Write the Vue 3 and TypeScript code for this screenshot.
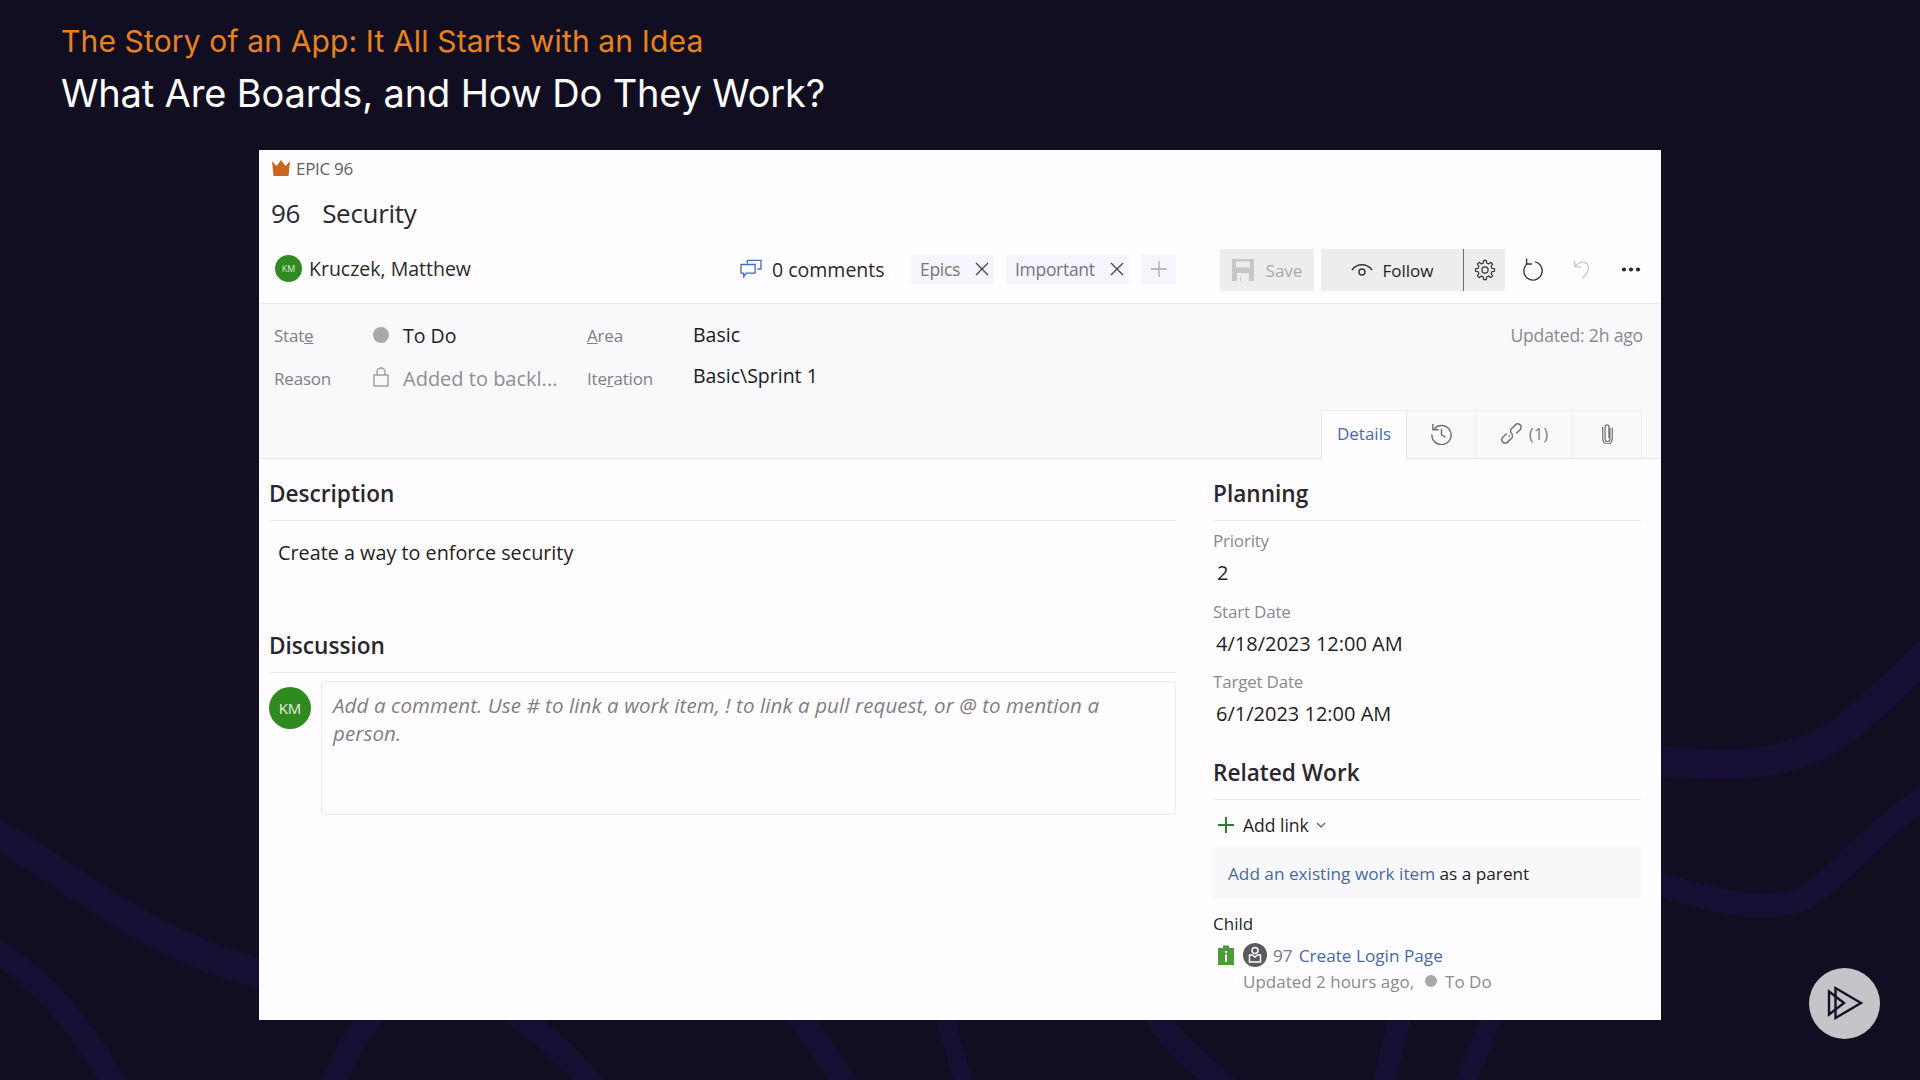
<script setup lang="ts">
const gearTeeth = 8

function gearPath(cx: number, cy: number, outer: number, inner: number): string {
  const pts: string[] = []
  for (let i = 0; i < gearTeeth; i++) {
    const a = (i / gearTeeth) * Math.PI * 2
    const step = (Math.PI * 2) / gearTeeth
    const offsets: [number, number][] = [
      [-0.3, inner],
      [-0.17, outer],
      [0.17, outer],
      [0.3, inner]
    ]
    for (const [o, r] of offsets) {
      const t = a + o * step
      pts.push(`${(cx + Math.cos(t) * r).toFixed(2)} ${(cy + Math.sin(t) * r).toFixed(2)}`)
    }
  }
  return `M${pts.join('L')}Z`
}

const gear = gearPath(12, 12, 10.5, 7.8)

const planning = [
  { label: 'Priority', value: '2', inset: 'inset-wide' },
  { label: 'Start Date', value: '4/18/2023 12:00 AM', inset: 'inset' },
  { label: 'Target Date', value: '6/1/2023 12:00 AM', inset: 'inset' }
]
</script>

<template>
  <div class="slide">
    <svg class="curves" viewBox="0 0 1920 1080" fill="none">
      <g stroke="#160f33">
        <path stroke-width="30" d="M-10 830 C80 880 150 950 270 975" />
        <path stroke-width="24" d="M-10 948 C40 975 85 1030 118 1090" />
        <path stroke-width="30" d="M1650 760 C1740 770 1800 765 1850 725 C1880 700 1900 680 1930 650" />
        <path stroke-width="24" d="M1650 882 C1700 895 1750 915 1800 900 C1840 880 1870 830 1930 795" />
        <path stroke-width="24" d="M332 1090 C345 1050 370 1010 400 990 C440 960 490 985 522 1020 C550 1040 575 1060 595 1090" />
        <path stroke-width="24" d="M795 1010 L850 1090" />
        <path stroke-width="18" d="M943 1010 L966 1090" />
        <path stroke-width="24" d="M1152 1010 C1170 1040 1200 1065 1229 1090" />
        <path stroke-width="22" d="M1402 1010 L1382 1090" />
        <path stroke-width="20" d="M1494 1010 L1463 1090" />
      </g>
    </svg>

    <header class="slide-head">
      <div class="course">The Story of an App: It All Starts with an Idea</div>
      <h1 class="clip">What Are Boards, and How Do They Work?</h1>
    </header>

    <main class="workitem">
      <div class="type-row">
        <svg class="crown" viewBox="0 0 18 16"><path d="M0 1l4.500 5L9 0l4.500 6L18 1l-1.500 15h-15z" fill="#c8661f" /></svg>
        <span>EPIC 96</span>
      </div>
      <div class="title-row"><span class="title-id">96</span><span>Security</span></div>

      <div class="action-row">
        <div class="assignee">
          <span class="avatar-sm">KM</span>
          <span>Kruczek, Matthew</span>
        </div>
        <div class="comments">
          <svg class="i-comments" viewBox="0 0 24 22" fill="none" stroke="#3f72b8" stroke-width="1.500">
            <path d="M8 5V1.500h15V11h-4" />
            <path d="M1 6h15.500v9.500H7l-3 4v-4H1z" />
          </svg>
          <span>0 comments</span>
        </div>
        <div class="tags">
          <span class="tag tag-epics">Epics
            <svg class="x" viewBox="0 0 14 14" stroke="#444" stroke-width="1.300"><path d="M1 1l12 12M13 1L1 13" /></svg>
          </span>
          <span class="tag tag-imp">Important
            <svg class="x" viewBox="0 0 14 14" stroke="#444" stroke-width="1.300"><path d="M1 1l12 12M13 1L1 13" /></svg>
          </span>
          <span class="tag tag-add">
            <svg class="plus" viewBox="0 0 16 16" stroke="#a9a9b2" stroke-width="1.300"><path d="M8 0v16M0 8h16" /></svg>
          </span>
        </div>
        <button class="btn btn-save">
          <svg class="i-save" viewBox="0 0 22 22" fill="#c6c6c6">
            <path fill-rule="evenodd" d="M0 0h22v22H0zM4 2.500v6h14v-6zM5 14v8h3v-4h1v4h8v-8z" />
          </svg>
          <span>Save</span>
        </button>
        <div class="follow-group">
          <button class="btn btn-follow">
            <svg class="i-eye" viewBox="0 0 22 14" fill="none" stroke="#333" stroke-width="1.400">
              <path d="M1 7c5-7 15-7 20 0" />
              <circle cx="11" cy="9" r="3" />
            </svg>
            <span>Follow</span>
          </button>
          <button class="btn btn-gear">
            <svg class="i-gear" viewBox="0 0 24 24" fill="none" stroke="#333" stroke-width="1.300">
              <path :d="gear" stroke-linejoin="round" />
              <circle cx="12" cy="12" r="3.400" />
            </svg>
          </button>
        </div>
        <svg class="i-refresh" viewBox="0 0 24 26" fill="none" stroke="#333" stroke-width="1.500">
          <path d="M6 6.500a10 10 0 1 0 8-1.800" />
          <path d="M5 1v6h6" />
        </svg>
        <svg class="i-undo" viewBox="0 0 20 26" fill="none" stroke="#c9c9c9" stroke-width="1.500">
          <path d="M2 3v7h7" />
          <path d="M2.500 9.500C6 5 12 3 16 7c3.500 4 1 9-6 16" />
        </svg>
        <svg class="i-more" viewBox="0 0 20 5" fill="#2b2b2b">
          <circle cx="3" cy="2.500" r="2.100" /><circle cx="10" cy="2.500" r="2.100" /><circle cx="17" cy="2.500" r="2.100" />
        </svg>
      </div>

      <section class="state-panel">
        <div class="state-grid">
          <span class="f-label">Stat<u>e</u></span>
          <span class="state-icon"><i class="dot" /></span>
          <span class="f-value">To Do</span>
          <span class="f-label"><u>A</u>rea</span>
          <span class="f-value strong">Basic</span>
          <span class="updated">Updated: 2h ago</span>

          <span class="f-label">Reason</span>
          <span class="state-icon">
            <svg class="i-lock" viewBox="0 0 16 20" fill="none" stroke="#9c9c9c" stroke-width="1.400">
              <rect x="1" y="8" width="14" height="11" />
              <path d="M4 8V5a4 4 0 0 1 8 0v3" />
            </svg>
          </span>
          <span class="f-value muted">Added to backl...</span>
          <span class="f-label">Ite<u>r</u>ation</span>
          <span class="f-value strong second">Basic\Sprint 1</span>
        </div>

        <nav class="tabs">
          <span class="tab tab-active">Details</span>
          <span class="tab tab-history">
            <svg class="i-history" viewBox="0 0 24 24" fill="none" stroke="#707070" stroke-width="1.500">
              <path d="M4.500 7A10 10 0 1 1 2 13" />
              <path d="M3 2v6h6M12 7v6l4 3" />
            </svg>
          </span>
          <span class="tab tab-links">
            <svg class="i-link" viewBox="0 0 24 24" fill="none" stroke="#707070" stroke-width="1.500">
              <path d="M10 14l-1 1M7 12l-4 4a3.500 3.500 0 0 0 5 5l4-4a3.500 3.500 0 0 0 0-5" />
              <path d="M12 12a3.500 3.500 0 0 1 0-5l4-4a3.500 3.500 0 0 1 5 5l-4 4" />
            </svg>
            <span>(1)</span>
          </span>
          <span class="tab tab-attach">
            <svg class="i-clip" viewBox="0 0 12 22" fill="none" stroke="#707070" stroke-width="1.300">
              <path d="M8.500 5v12a2.500 2.500 0 0 1-5 0V4a2 2 0 0 1 4 0v12" />
              <path d="M11 5v12a5 5 0 0 1-10 0V4" />
            </svg>
          </span>
        </nav>
      </section>

      <div class="form-body">
        <div class="col-left">
          <h2 class="sec-head">Description</h2>
          <p class="desc">Create a way to enforce security</p>
          <h2 class="sec-head discussion">Discussion</h2>
          <div class="comment-row">
            <span class="avatar-lg">KM</span>
            <div class="comment-box">Add a comment. Use # to link a work item, ! to link a pull request, or @ to mention a person.</div>
          </div>
        </div>

        <aside class="col-right">
          <h2 class="sec-head">Planning</h2>
          <div class="planning">
            <div v-for="item in planning" :key="item.label" class="plan-field">
              <div class="plan-label">{{ item.label }}</div>
              <div class="plan-value" :class="item.inset">{{ item.value }}</div>
            </div>
          </div>

          <h2 class="sec-head related">Related Work</h2>
          <div class="add-link">
            <svg class="i-add" viewBox="0 0 16 16" stroke="#2f7d32" stroke-width="2"><path d="M8 0v16M0 8h16" /></svg>
            <span>Add link</span>
            <svg class="i-chev" viewBox="0 0 10 6" fill="none" stroke="#555" stroke-width="1.100"><path d="M1 1l4 4 4-4" /></svg>
          </div>
          <div class="parent-hint"><span class="link">Add an existing work item</span> as a parent</div>
          <div class="child-label">Child</div>
          <div class="child-row">
            <svg class="i-task" viewBox="0 0 16 20">
              <path fill-rule="evenodd" fill="#4c9a3a" d="M0 3h5V0.500h6V3h5v17H0zM7 6v2h2V6zM7 9.500V17h2V9.500z" />
            </svg>
            <svg class="i-person" viewBox="0 0 24 24">
              <circle cx="12" cy="12" r="12" fill="#5a5a5e" />
              <circle cx="12" cy="7.500" r="3" fill="none" stroke="#fff" stroke-width="1.500" />
              <path d="M6.500 12h3l2.500 2 2.500-2h3v7h-11z" fill="none" stroke="#fff" stroke-width="1.500" />
            </svg>
            <span class="child-id">97</span>
            <span class="link">Create Login Page</span>
          </div>
          <div class="child-meta">
            <span>Updated 2 hours ago,</span>
            <i class="dot-sm" />
            <span>To Do</span>
          </div>
        </aside>
      </div>
    </main>

    <div class="play-badge">
      <svg viewBox="0 0 40 40" fill="none" stroke="#151126" stroke-width="2.400">
        <path d="M4 7.500v23l15-11.500z" />
        <path d="M10.500 4v30L36 19z" />
      </svg>
    </div>
  </div>
</template>

<style scoped>
.slide {
  position: relative;
  width: 1920px;
  height: 1080px;
  overflow: hidden;
  background: #120e22;
  font-family: "Open Sans", "Noto Sans", sans-serif;
}

.curves {
  position: absolute;
  inset: 0;
  width: 1920px;
  height: 1080px;
}

.slide-head {
  position: relative;
  height: 150px;
  padding: 21px 0 0 61px;
  box-sizing: border-box;
  font-family: Inter, "Noto Sans", sans-serif;
}

.course {
  height: 40px;
  line-height: 40px;
  font-size: 30px;
  letter-spacing: 0.14px;
  color: #e8821e;
}

.clip {
  margin: 10px 0 0;
  line-height: 44px;
  font-size: 38px;
  font-weight: 400;
  letter-spacing: -0.15px;
  color: #fff;
}

.workitem {
  position: relative;
  margin-left: 259px;
  width: 1402px;
  height: 870px;
  background: #fffdff;
  color: #1f1d21;
  font-size: 19.500px;
}

.type-row {
  display: flex;
  align-items: center;
  gap: 6px;
  height: 38px;
  padding: 0 0 2px 13px;
  box-sizing: border-box;
  font-size: 17px;
  letter-spacing: -0.3px;
  color: #5f5e62;
}

.crown {
  width: 18px;
  height: 16px;
}

.title-row {
  display: flex;
  align-items: center;
  gap: 22px;
  height: 52px;
  padding: 0 0 2px 12px;
  box-sizing: border-box;
  font-size: 26px;
  letter-spacing: -0.3px;
  color: #2a282d;
}

.action-row {
  display: flex;
  align-items: center;
  height: 63px;
  padding: 0 0 5px 0;
  box-sizing: border-box;
}

.assignee {
  display: flex;
  align-items: center;
  gap: 7px;
  width: 481px;
  padding: 0 0 2px 16px;
  box-sizing: border-box;
  font-size: 19.500px;
  color: #2a282d;
}

.avatar-sm {
  display: flex;
  align-items: center;
  justify-content: center;
  width: 27px;
  height: 27px;
  border-radius: 50%;
  background: #2f8a1f;
  color: #d6ebd2;
  font-size: 9px;
}

.comments {
  display: flex;
  align-items: center;
  gap: 10px;
  width: 171px;
  font-size: 19.500px;
  color: #2a282d;
}

.i-comments {
  width: 22px;
  height: 20px;
}

.tags {
  display: flex;
  align-items: center;
  gap: 12px;
  width: 309px;
}

.tag {
  display: flex;
  align-items: center;
  justify-content: space-between;
  height: 29px;
  padding: 0 5px 0 9px;
  box-sizing: border-box;
  background: #f6f4fc;
  font-size: 17.500px;
  letter-spacing: -0.3px;
  color: #77767c;
}

.tag-epics { width: 83px; }
.tag-imp { width: 123px; }
.tag-add { width: 35px; justify-content: center; padding: 0; }

.x {
  width: 14px;
  height: 14px;
}

.plus {
  width: 16px;
  height: 16px;
}

.btn {
  display: flex;
  align-items: center;
  justify-content: center;
  height: 42px;
  margin-top: 2px;
  padding: 0;
  border: 0;
  background: #eeeded;
  font-family: inherit;
  font-size: 17px;
}

.btn-save {
  gap: 12px;
  width: 94px;
  color: #a9a9a9;
}

.i-save {
  width: 22px;
  height: 22px;
}

.follow-group {
  display: flex;
  margin-left: 7px;
}

.btn-follow {
  gap: 10px;
  width: 143px;
  border-right: 1px solid #6d6d6d;
  color: #1f1d21;
}

.i-eye {
  width: 22px;
  height: 14px;
}

.btn-gear {
  width: 41px;
}

.i-gear {
  width: 22px;
  height: 22px;
}

.i-refresh {
  width: 22px;
  height: 25px;
  margin-left: 17px;
}

.i-undo {
  width: 18px;
  height: 25px;
  margin-left: 29px;
}

.i-more {
  width: 20px;
  height: 5px;
  margin-left: 30px;
}

.state-panel {
  display: flex;
  flex-direction: column;
  height: 156px;
  box-sizing: border-box;
  padding-top: 10px;
  background: #f9f8fa;
  border-top: 1px solid #e9e8ea;
  border-bottom: 1px solid #e6e5e7;
}

.state-grid {
  display: grid;
  grid-template-columns: 93px 36px 184px 106px 1fr auto;
  grid-auto-rows: 43px;
  align-items: center;
  padding: 0 18px 0 15px;
}

.f-label {
  font-size: 17px;
  letter-spacing: -0.2px;
  color: #807f84;
}

.f-value {
  font-size: 19.500px;
  color: #222025;
}

.f-value.muted {
  font-size: 20px;
  color: #8f8e92;
}

.f-value.strong {
  margin-top: -3px;
  color: #1b1a1d;
}

.f-value.strong.second {
  margin-top: -6px;
}

.state-icon {
  display: flex;
  align-items: center;
  padding-left: 6px;
}

.dot {
  display: block;
  width: 16px;
  height: 16px;
  margin-top: -1px;
  border-radius: 50%;
  background: #a9a9ab;
}

.i-lock {
  width: 16px;
  height: 20px;
  margin-top: -4px;
}

.updated {
  margin-top: -2px;
  font-size: 17.600px;
  letter-spacing: -0.2px;
  color: #8a898d;
}

.state-grid .f-value.strong + .f-label,
.state-grid .updated + .f-label {
  grid-column: 1;
}

.tabs {
  display: flex;
  justify-content: flex-end;
  height: 48px;
  margin-top: 10px;
  padding-right: 19px;
}

.tab {
  display: flex;
  align-items: center;
  justify-content: center;
  gap: 6px;
  height: 48px;
  padding-bottom: 3px;
  box-sizing: border-box;
  border-top: 1px solid #eeedef;
  border-right: 1px solid #eeedef;
  font-size: 17px;
  color: #807f84;
}

.tab-active {
  position: relative;
  width: 86px;
  height: 49px;
  padding-bottom: 4px;
  background: #fffdff;
  border-left: 1px solid #e9e8ea;
  border-right: 1px solid #e9e8ea;
  color: #4469b3;
}

.tab-history { width: 69px; }
.tab-links { width: 97px; }
.tab-attach { width: 69px; }

.i-history,
.i-link {
  width: 23px;
  height: 23px;
}

.i-clip {
  width: 13px;
  height: 21px;
}

.form-body {
  display: grid;
  grid-template-columns: 907px 428px;
  column-gap: 37px;
  padding-left: 10px;
}

.sec-head {
  margin: 0;
  padding: 22px 0 13px;
  border-bottom: 1px solid #ebeaec;
  font-size: 22.600px;
  line-height: 26px;
  font-weight: 600;
  color: #29272c;
}

.desc {
  margin: 20px 0 0 9px;
  font-size: 19.800px;
  line-height: 24px;
}

.sec-head.discussion {
  margin-top: 46px;
}

.comment-row {
  display: flex;
  gap: 10px;
  margin-top: 8px;
}

.avatar-lg {
  display: flex;
  align-items: center;
  justify-content: center;
  flex: none;
  width: 42px;
  height: 42px;
  margin-top: 6px;
  border-radius: 50%;
  background: #2f8a1f;
  color: #e5f1e2;
  font-size: 15px;
}

.comment-box {
  flex: 1;
  height: 134px;
  box-sizing: border-box;
  padding: 9px 40px 0 11px;
  border: 1px solid #e9e8ea;
  border-radius: 3px;
  font-size: 20.500px;
  line-height: 28px;
  font-style: italic;
  letter-spacing: 0.1px;
  color: #7f7e83;
}

.planning {
  display: flex;
  flex-direction: column;
  gap: 15.500px;
  margin-top: 9px;
}

.plan-label {
  height: 22px;
  line-height: 22px;
  font-size: 17px;
  letter-spacing: -0.2px;
  color: #8a898d;
}

.plan-value {
  height: 24px;
  margin-top: 9px;
  line-height: 24px;
  font-size: 20px;
}

.inset { padding-left: 3px; }
.inset-wide { padding-left: 4px; }

.sec-head.related {
  margin-top: 13px;
  padding-top: 21px;
}

.add-link {
  display: flex;
  align-items: center;
  height: 30px;
  margin-top: 10px;
  padding-left: 5px;
  font-size: 17.500px;
}

.i-add {
  width: 16px;
  height: 16px;
  margin-right: 9px;
}

.i-chev {
  width: 10px;
  height: 6px;
  margin-left: 7px;
}

.parent-hint {
  height: 52px;
  margin-top: 7px;
  padding-left: 15px;
  line-height: 54px;
  background: #f8f7f9;
  font-size: 17.200px;
}

.link {
  color: #466a9f;
}

.child-label {
  height: 22px;
  margin-top: 14px;
  line-height: 22px;
  font-size: 17px;
}

.child-row {
  display: flex;
  align-items: center;
  height: 24px;
  margin-top: 8px;
  padding-left: 5px;
  font-size: 17.200px;
}

.i-task {
  width: 16px;
  height: 20px;
}

.i-person {
  width: 24px;
  height: 24px;
  margin-left: 9px;
}

.child-id {
  margin: 0 6px 0 6px;
  color: #77767c;
}

.child-meta {
  display: flex;
  align-items: center;
  height: 24px;
  margin-top: 2px;
  padding-left: 30px;
  font-size: 17px;
  color: #8a898d;
}

.dot-sm {
  width: 12px;
  height: 12px;
  margin: 0 8px 0 11px;
  border-radius: 50%;
  background: #a9a9ab;
}

.play-badge {
  position: absolute;
  left: 1809px;
  top: 968px;
  display: flex;
  align-items: center;
  justify-content: center;
  width: 71px;
  height: 71px;
  border-radius: 50%;
  background: #c5c4c9;
}

.play-badge svg {
  width: 40px;
  height: 40px;
}
</style>
